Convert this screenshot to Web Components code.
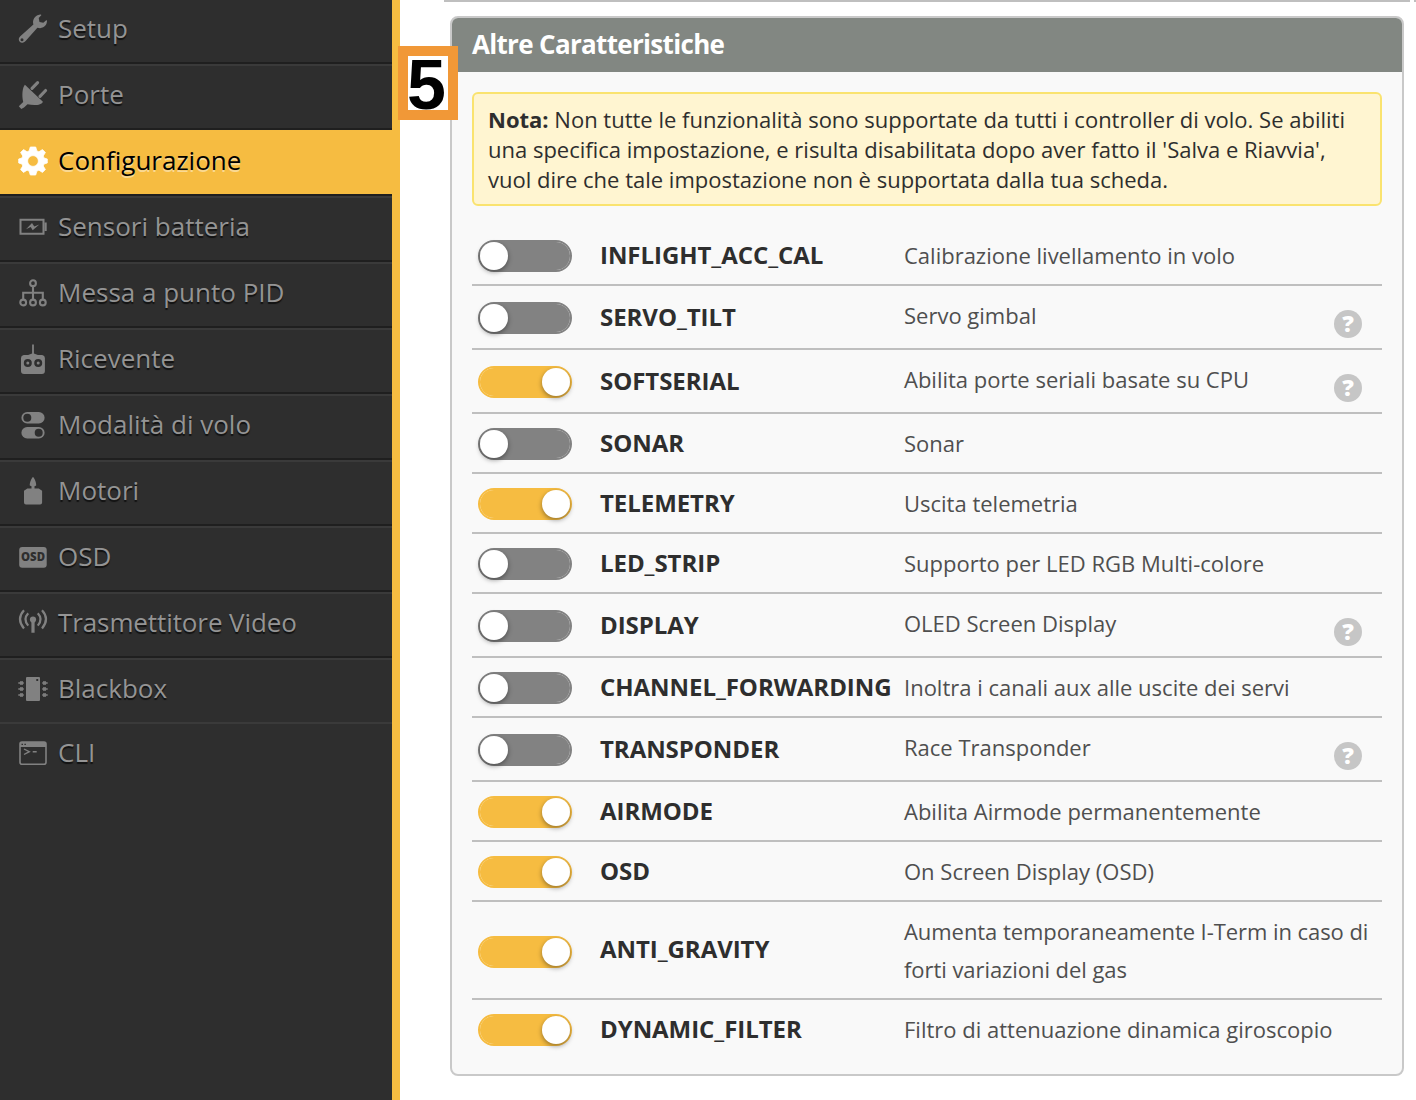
<!DOCTYPE html>
<html lang="it">
<head>
<meta charset="utf-8">
<title>Configurazione</title>
<style>
html,body{margin:0;height:1100px;overflow:hidden;background:#fff;font-family:"Open Sans","Noto Sans",sans-serif}
</style>
</head>
<body>
<config-app></config-app>
<script>
const define=(name,html,setup)=>customElements.define(name,class extends HTMLElement{
  connectedCallback(){
    if(this.shadowRoot)return;
    const root=this.attachShadow({mode:'open'});
    root.innerHTML=typeof html==='function'?html(this):html;
    if(setup)setup(this,root);
  }
});

const ICONS={
 wrench:'<path fill-rule="evenodd" d="M19.500 1.300C22 .2 23.500 .4 23.300 1.200L20.700 4.100 21.500 8 25.300 8.800 28.200 6.300C29.400 5.600 29.200 8.600 27.800 11.100 25.800 14 22.500 14.700 19.400 13.700L7.600 26.900C4.700 30 .9 28.700 .8 25.500 .8 24.200 1.400 23.200 2.300 22.300L15.400 10.500C14.300 6.900 15.800 3 19.500 1.300ZM4 24.300A1.500 1.500 0 1 0 4 27.300 1.500 1.500 0 1 0 4 24.300Z"/>',
 plug:'<path d="M6.900 4.800 24.900 21.800C24 25.400 15.500 25.800 9.500 24.300L6 27.500 3.300 29 .8 26.200 5.200 22C3.600 15 4.500 7.500 6.900 4.800Z"/><path d="M14 8.300 19.600 2.700M22 16.300 27.600 10.500" fill="none" stroke="currentColor" stroke-width="3.100" stroke-linecap="round"/>',
 gear:'<path fill-rule="evenodd" stroke="currentColor" stroke-width=".8" stroke-linejoin="round" d="M12.300 1h5.400l1.200 4 2 .8 3.600-2.200 2.900 2.900L25.200 10l.8 2 3.300 1v4l-3.300 1-.8 2 2.200 3.500-2.900 2.900-3.600-2.200-2 .8-1.200 4h-5.400l-1.200-4-2-.8-3.600 2.200-2.900-2.900L4.800 20 4 18 .7 17v-4L4 12l.8-2-2.200-3.500 2.900-2.900L9.100 5.800l2-.8zM15 9.600a5.400 5.400 0 1 0 0 10.800 5.400 5.400 0 1 0 0-10.800Z"/>',
 battery:'<path d="M2.500 7.700h23v14h-23z" fill="none" stroke="currentColor" stroke-width="2"/><path d="M26.500 10.500h2.200v8.400h-2.200zM8 17.200 14 11 16.300 14.600 21.300 12.600 14.700 18.200 12.700 15Z"/>',
 tree:'<g fill="none" stroke="currentColor" stroke-width="2.100"><circle cx="15" cy="5.200" r="2.900"/><circle cx="5.200" cy="24.500" r="2.900"/><circle cx="15" cy="24.500" r="2.900"/><circle cx="24.800" cy="24.500" r="2.900"/><path d="M15 8v13.500M5.200 21.500v-6.700h19.600v6.700"/></g>',
 remote:'<path fill-rule="evenodd" d="M14.100 .5h1.800v9.100l4 1.500h4.300q2.700.5 2.700 3v13q0 3-3 3H6q-3 0-3-3v-13q0-2.500 2.700-3h4.400l4-1.500zM9.800 15a4 4 0 1 0 0 8 4 4 0 1 0 0-8Zm10.400 0a4 4 0 1 0 0 8 4 4 0 1 0 0-8Z"/><circle cx="9.800" cy="19" r="1.500"/><circle cx="20.200" cy="19" r="1.500"/>',
 toggles:'<rect x="3.400" y="2" width="23.200" height="11.500" rx="5.700"/><rect x="3.400" y="17" width="23.200" height="11.500" rx="5.700"/><g fill="#2e2e2e"><circle cx="9.300" cy="7.700" r="4"/><circle cx="20.700" cy="22.700" r="4"/></g>',
 motor:'<path d="M15 1c1.600 1.200 3.500 6 3.200 8.500l-1.700.8v2.300h4.300l3.300 2.200v11.600q0 2-2 2H8q-2 0-2-2V14.800l3.300-2.200h4.200v-2.300l-1.700-.8C11.500 7 13.400 2.200 15 1Z"/>',
 osd:'<rect x="1.200" y="5" width="27.500" height="20.700" rx="3"/><text x="15" y="19.200" text-anchor="middle" textLength="24" lengthAdjust="spacingAndGlyphs" font-family="Open Sans" font-weight="800" font-size="11.500" fill="#2e2e2e">OSD</text>',
 antenna:'<g fill="none" stroke="currentColor" stroke-width="2.200"><path d="M6 2.300Q-2 11 6 20.500M10.200 5.200Q4.700 11.200 10.200 17.600M19.800 5.200Q25.300 11.200 19.800 17.600M24 2.300Q32 11 24 20.500"/></g><circle cx="15" cy="11.500" r="3.100"/><path d="M13.400 12h3.200v12.800h-3.200z"/>',
 chip:'<path fill-rule="evenodd" d="M9 3h12q1 0 1 1v22q0 1-1 1H9q-1 0-1-1V4q0-1 1-1Zm9.300 2v2h1.900V5z"/><path d="M.3 9h5.500M.3 15h5.500M.3 21h5.500M24.200 9h5.500M24.200 15h5.500M24.200 21h5.500" fill="none" stroke="currentColor" stroke-width="1.700"/><path d="M2 7h3v4H2zm0 6h3v4H2zm0 6h3v4H2zM25 7h3v4h-3zm0 6h3v4h-3zm0 6h3v4h-3z" opacity=".75"/>',
 terminal:'<rect x="2" y="4" width="26" height="22.200" rx="2" fill="none" stroke="currentColor" stroke-width="1.600"/><path d="M2 4h26v5H2z"/><path d="M3.500 5.700h1.500v1.400H3.500zm2.900 0h1.500v1.400H6.400z" fill="#2e2e2e"/><path d="m6 11 5.300 2.700L6 16.500M14.700 13.700h4" fill="none" stroke="currentColor" stroke-width="1.400"/>'
};

define('nav-item',el=>`<style>
:host{display:flex;align-items:center;box-sizing:border-box;height:66px;padding:0 0 4px 18px;gap:10px;border-top:2px solid #3a3a3a;border-bottom:2px solid #1f1f1f;color:#949494;font-size:26px;line-height:36px;text-shadow:0 2px 1px rgba(0,0,0,.65)}
:host([active]){border-top-color:#f6bc41;background:#f6bc41;color:#000;text-shadow:0 2px 0 rgba(255,255,255,.45)}
:host([flat]){height:64px;border-bottom:0}
:host([icon=antenna]){letter-spacing:-.1px}
svg{width:30px;height:30px;fill:currentColor;color:#818181;flex:none;text-shadow:none;letter-spacing:0;overflow:visible}
:host([active]) svg{color:#fff}
span{white-space:nowrap;margin-top:-2px}
</style><svg viewBox="0 0 30 30">${ICONS[el.getAttribute('icon')]}</svg><span><slot></slot></span>`);

define('side-nav',`<style>
:host{display:block;box-sizing:border-box;width:400px;height:1100px;flex:none;background:#2e2e2e;border-right:8px solid #f6bc41;overflow:hidden}
nav{display:flex;flex-direction:column;margin-top:-2px}
</style><nav><slot></slot></nav>`);

define('toggle-switch',`<style>
:host{display:block;box-sizing:border-box;width:94px;height:32px;border:2px solid #828282;border-radius:16px;background:#fff;box-shadow:inset 0 0 0 16px #828282}
:host([on]){border-color:#f6bc41;box-shadow:inset 0 0 0 16px #f6bc41;display:flex;justify-content:flex-end}
i{display:block;width:28px;height:28px;border-radius:50%;background:#fff;box-shadow:0 2px 5px rgba(0,0,0,.4)}
</style><i></i>`);

define('help-tip',`<style>
:host{display:grid;place-items:center;width:28px;height:28px;border-radius:50%;background:#c6c6c6;color:#fff;font:800 23px/26px "Open Sans",sans-serif}
span{margin-top:-2px}
</style><span>?</span>`);

define('feature-row',el=>`<style>
:host{display:grid;grid-template-columns:128px 304px 1fr auto;box-sizing:border-box;height:60px;border-bottom:2px solid #bfbfbf;align-items:center}
:host([help]){height:64px}
:host([tall]){height:98px}
:host([last]){border-bottom:0;height:58px}
toggle-switch{margin:2px 0 0 6px}
:host([tall]) toggle-switch{margin-top:4px}
b{font-size:24px;line-height:30px;letter-spacing:-.05px;color:#2e2e2e;white-space:nowrap}
:host([tall]) b{margin-top:-2px}
p{margin:0;font-size:22px;line-height:38px;color:#4f4f4f}
:host([help]) p{margin-top:-4px}
:host([tall]) p{letter-spacing:-.06px}
help-tip{margin:14px 20px 0 0}
</style><toggle-switch ${el.hasAttribute('on')?'on':''}></toggle-switch><b>${el.getAttribute('name')}</b><p><slot></slot></p>${el.hasAttribute('help')?'<help-tip></help-tip>':''}`);

define('note-box',`<style>
:host{display:block;box-sizing:border-box;height:114px;margin:20px 20px 20px;padding:10px 14px;border:2px solid #fae36f;border-radius:6px;background:#fff5d1;color:#2e2e2e;font-size:22px;line-height:30px}
</style><slot></slot>`);

define('feature-panel',el=>`<style>
:host{display:block;box-sizing:border-box;width:954px;height:1060px;margin:14px 0 0 50px;border:2px solid #c9c9c9;border-radius:8px;background:#f9f9f9;overflow:hidden}
h2{margin:0;height:54px;padding-left:20px;background:#828782;color:#fff;font-size:26px;line-height:52px;font-weight:700;letter-spacing:-.68px}
.rows{margin:0 20px}
</style><h2>${el.getAttribute('heading')}</h2><slot name="note"></slot><div class="rows"><slot></slot></div>`);

define('step-badge',`<style>
:host{position:absolute;left:398px;top:46px;display:flex;box-sizing:border-box;width:60px;height:74px;border:10px solid #f19837;background:#fff;color:#000;font:700 70px/54px "Liberation Sans",sans-serif}
span{display:block;height:54px;padding-top:2px;margin-left:-1px}
</style><span><slot></slot></span>`);

const NAV=[['wrench','Setup'],['plug','Porte'],['gear','Configurazione','active'],['battery','Sensori batteria'],['tree','Messa a punto PID'],['remote','Ricevente'],['toggles','Modalità di volo'],['motor','Motori'],['osd','OSD'],['antenna','Trasmettitore Video'],['chip','Blackbox','flat'],['terminal','CLI','flat']];
const ROWS=[['INFLIGHT_ACC_CAL','Calibrazione livellamento in volo',''],['SERVO_TILT','Servo gimbal','help'],['SOFTSERIAL','Abilita porte seriali basate su CPU','on help'],['SONAR','Sonar',''],['TELEMETRY','Uscita telemetria','on'],['LED_STRIP','Supporto per LED RGB Multi-colore',''],['DISPLAY','OLED Screen Display','help'],['CHANNEL_FORWARDING','Inoltra i canali aux alle uscite dei servi',''],['TRANSPONDER','Race Transponder','help'],['AIRMODE','Abilita Airmode permanentemente','on'],['OSD','On Screen Display (OSD)','on'],['ANTI_GRAVITY','Aumenta temporaneamente I-Term in caso di forti variazioni del gas','on tall'],['DYNAMIC_FILTER','Filtro di attenuazione dinamica giroscopio','on last']];

define('config-app',()=>`<style>
:host{display:flex;width:1416px;height:1100px}
main{flex:1;min-width:0}
.rule{display:flex;gap:4px;height:2px;padding-left:44px}
.rule i{background:#bfbfbf;width:966px;flex:none}
.rule i+i{width:2px}
</style>
<side-nav>${NAV.map(([i,t,a=''])=>`<nav-item icon="${i}" ${a}>${t}</nav-item>`).join('')}</side-nav>
<main><div class="rule"><i></i><i></i></div>
<feature-panel heading="Altre Caratteristiche">
<note-box slot="note"><b>Nota:</b> Non tutte le funzionalità sono supportate da tutti i controller di volo. Se abiliti una specifica impostazione, e risulta disabilitata dopo aver fatto il 'Salva e Riavvia', vuol dire che tale impostazione non è supportata dalla tua scheda.</note-box>
${ROWS.map(([n,d,a])=>`<feature-row name="${n}" ${a}>${d}</feature-row>`).join('')}
</feature-panel></main>
<step-badge>5</step-badge>`);
</script>
</body>
</html>
